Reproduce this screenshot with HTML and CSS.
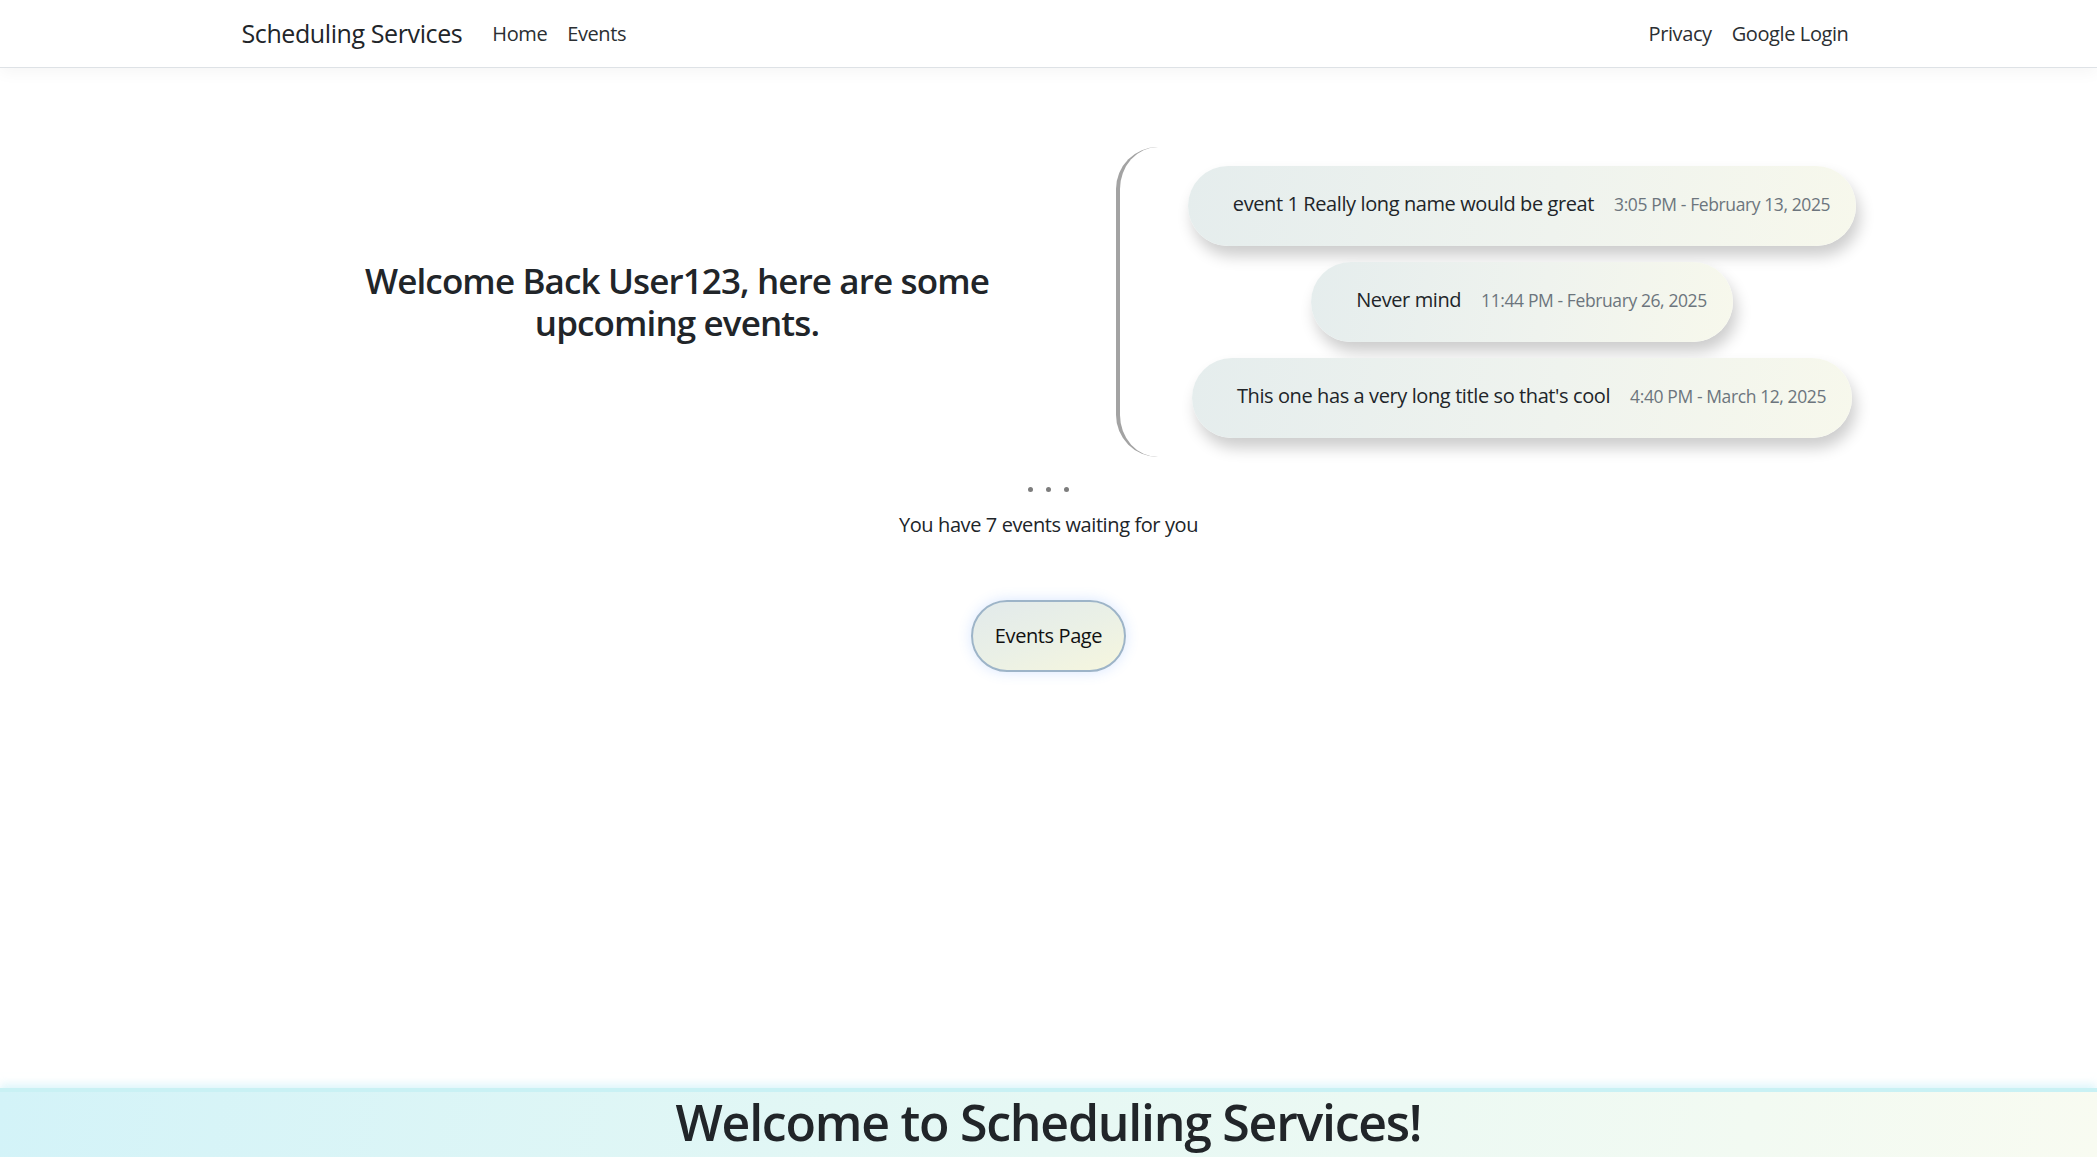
FILE: index.html
```html
<!DOCTYPE html>
<html lang="en">
<head>
<meta charset="utf-8">
<title>Scheduling Services</title>
<link rel="stylesheet" href="styles.css">
</head>
<body>
<nav class="navbar">
  <div class="container nav-inner">
    <a class="brand" href="#">Scheduling Services</a>
    <ul class="nav-links">
      <li><a href="#">Home</a></li>
      <li><a href="#">Events</a></li>
    </ul>
    <ul class="nav-links nav-right">
      <li><a href="#">Privacy</a></li>
      <li><a href="#">Google Login</a></li>
    </ul>
  </div>
</nav>
<main class="container main">
  <section class="hero">
    <div class="welcome">
      <h3>Welcome Back User123, here are some upcoming events.</h3>
    </div>
    <div class="events">
      <div class="pill"><span class="title">event 1 Really long name would be great</span><span class="time">3:05 PM - February 13, 2025</span></div>
      <div class="pill"><span class="title">Never mind</span><span class="time">11:44 PM - February 26, 2025</span></div>
      <div class="pill"><span class="title">This one has a very long title so that's cool</span><span class="time">4:40 PM - March 12, 2025</span></div>
    </div>
  </section>
  <div class="dots"><span></span><span></span><span></span></div>
  <p class="count">You have 7 events waiting for you</p>
  <div class="btn-wrap"><a class="btn" href="#">Events Page</a></div>
</main>
<footer class="footer">
  <h1>Welcome to Scheduling Services!</h1>
</footer>
</body>
</html>
```
FILE: styles.css
```css
* { box-sizing: border-box; }
html, body { margin: 0; padding: 0; }
body {
  font-family: "Open Sans", "Noto Sans", sans-serif;
  font-size: 20px;
  line-height: 1.5;
  letter-spacing: -0.02em;
  color: #212529;
  background: #fff;
  min-height: 100vh;
  display: flex;
  flex-direction: column;
}
a { color: inherit; text-decoration: none; }
ul { list-style: none; margin: 0; padding: 0; }

.container {
  width: 1650px;
  margin: 0 auto;
  padding: 0 15px;
}

.navbar {
  height: 68px;
  border-bottom: 1px solid #dee2e6;
  box-shadow: 0 5px 15px rgba(0, 0, 0, 0.04);
}
.nav-inner {
  height: 100%;
  display: flex;
  align-items: center;
}
.brand {
  font-size: 25px;
  color: #212529;
  margin-right: 20px;
  padding-left: 3px;
}
.nav-links { display: flex; }
.nav-links a {
  display: block;
  padding: 0 10px;
  color: #2b2f33;
}
.nav-right { margin-left: auto; }

.main {
  flex: 1;
  padding-top: 79px;
}

.hero {
  display: flex;
  align-items: stretch;
}
.welcome {
  flex: 1;
  min-width: 0;
  display: flex;
  align-items: center;
  justify-content: center;
}
.welcome h3 {
  margin: 0;
  max-width: 720px;
  text-align: center;
  font-size: 35px;
  font-weight: 600;
  line-height: 42px;
  letter-spacing: -0.025em;
}
.events {
  flex: 0 0 743px;
  min-width: 0;
  display: flex;
  flex-direction: column;
  align-items: center;
  gap: 16px;
  padding: 19px 0 19px 66px;
  border-left: 4px solid #a3a3a3;
  border-radius: 42px 0 0 42px;
}
.pill {
  height: 80px;
  display: flex;
  align-items: center;
  gap: 20px;
  padding: 0 26px 4px 45px;
  border-radius: 40px;
  background: linear-gradient(100deg, #e5eded 0%, #eff3ee 55%, #f7f8ec 100%);
  box-shadow: 4px 10px 15px rgba(0, 0, 0, 0.2);
  white-space: nowrap;
}
.pill .title { font-size: 20px; color: #212529; }
.pill .time { font-size: 17.5px; color: #6c757d; }

.dots {
  display: flex;
  justify-content: center;
  gap: 13px;
  margin-top: 30px;
}
.dots span {
  width: 5px;
  height: 5px;
  border-radius: 50%;
  background: #7d7d7d;
}
.count {
  margin: 18px 0 0;
  text-align: center;
}
.btn-wrap {
  display: flex;
  justify-content: center;
  margin-top: 60px;
}
.btn {
  display: inline-flex;
  align-items: center;
  height: 72px;
  padding: 0 22px;
  border: 2px solid #9db4c8;
  border-radius: 36px;
  color: #111;
  background: linear-gradient(160deg, #e2eaeb 0%, #eaf0e6 50%, #f6f6de 100%);
  box-shadow: 0 0 14px rgba(60, 130, 255, 0.2);
}

.footer {
  height: 69px;
  border-top: 4px solid #c9f1f4;
  box-shadow: 0 -4px 8px rgba(200, 240, 248, 0.6);
  background: linear-gradient(100deg, #d3f3f8 0%, #e6f8f4 50%, #f8fbf1 100%);
  overflow: hidden;
}
.footer h1 {
  margin: 0;
  text-align: center;
  font-size: 50px;
  font-weight: 600;
  line-height: 60px;
  letter-spacing: -0.025em;
}
```
